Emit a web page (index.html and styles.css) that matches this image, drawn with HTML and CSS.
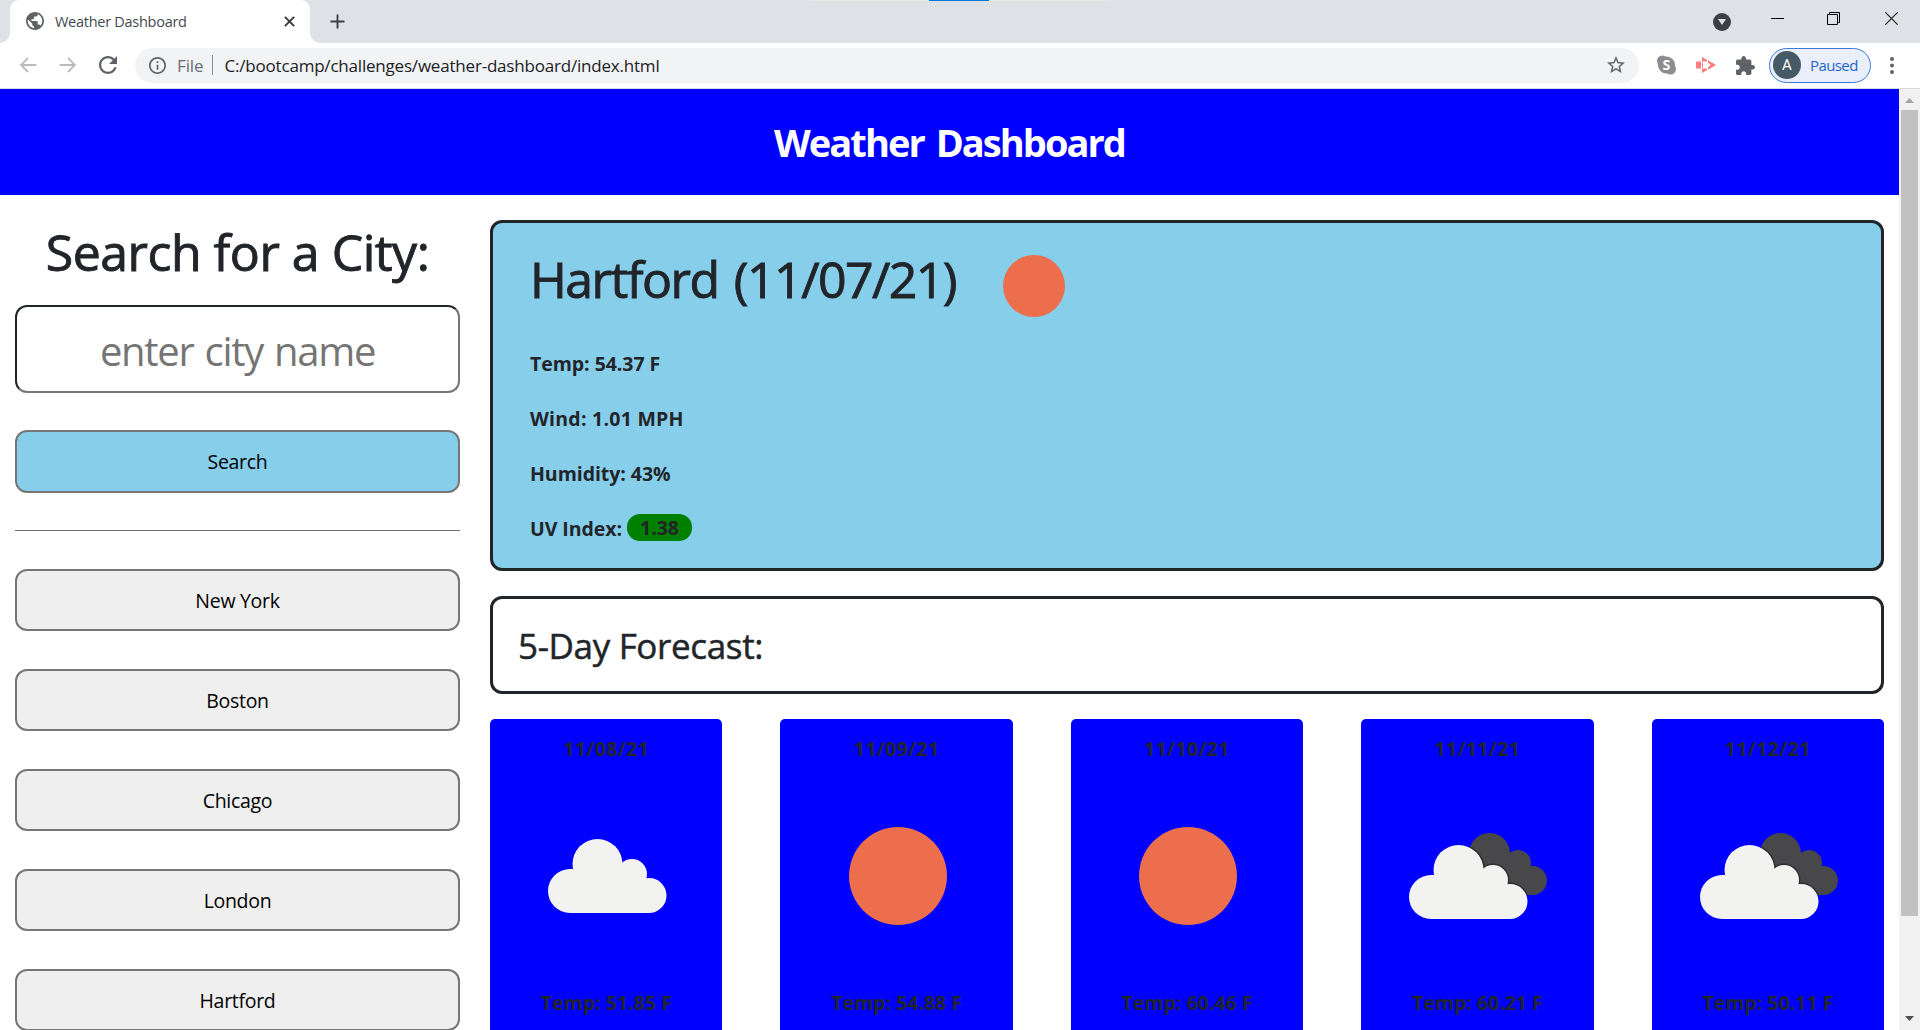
FILE: index.html
```html
<!DOCTYPE html>
<html lang="en">
<head>
<meta charset="utf-8">
<title>Weather Dashboard</title>
<link rel="stylesheet" href="styles.css">
</head>
<body>
<svg class="defs" width="0" height="0" aria-hidden="true">
  <symbol id="sun" viewBox="0 0 100 100"><circle cx="50" cy="50" r="50" fill="#ec6e4c"/></symbol>
  <symbol id="cloud" viewBox="0 0 119 74">
    <g fill="#f2f2f0"><circle cx="22" cy="52" r="22"/><circle cx="49.5" cy="25" r="25"/><circle cx="84" cy="35" r="15"/><circle cx="101" cy="56.5" r="17.5"/><path d="M22 30H84V42H101V74H22Z"/></g>
  </symbol>
  <clipPath id="back-cloud"><circle cx="80.5" cy="20.5" r="20.5"/><circle cx="109" cy="30" r="13"/><circle cx="123.5" cy="47.5" r="14.5"/><path d="M80 20H109L123 36V62H90Z"/></clipPath>
  <symbol id="clouds" viewBox="0 0 138 86">
    <g clip-path="url(#back-cloud)"><path d="M0 0H138V86H0Z" fill="#48484a"/><g fill="#303032"><circle cx="49.5" cy="37" r="26.500"/><circle cx="84" cy="47" r="16.500"/><circle cx="101" cy="68.500" r="19"/></g></g>
    <use href="#cloud" x="0" y="12" width="119" height="74"/>
  </symbol>
</svg>

<div class="tabstrip">
  <div class="tab">
    <svg class="globe" viewBox="2 2 20 20"><path fill="#5f6368" d="M12 2C6.480 2 2 6.480 2 12s4.480 10 10 10 10-4.480 10-10S17.520 2 12 2zm-1 17.930c-3.950-.49-7-3.850-7-7.930 0-.62.08-1.210.21-1.790L9 15v1c0 1.100.9 2 2 2v1.930zm6.900-2.540c-.26-.81-1-1.390-1.900-1.390h-1v-3c0-.55-.45-1-1-1H8v-2h2c.55 0 1-.45 1-1V7h2c1.100 0 2-.9 2-2v-.41c2.930 1.190 5 4.060 5 7.410 0 2.080-.8 3.970-2.100 5.390z"/></svg>
    <span class="tab-title">Weather Dashboard</span>
    <svg class="tab-close" viewBox="0 0 10 10"><path d="M.8.8l8.400 8.400M9.200.8L.8 9.200" stroke="#3c4043" stroke-width="1.900"/></svg>
  </div>
  <svg class="new-tab" viewBox="0 0 16 16"><path d="M8 .5v15M.5 8h15" stroke="#3c4043" stroke-width="2"/></svg>
  <div class="progress"></div>
  <div class="window-controls">
    <svg width="18" height="18" viewBox="0 0 18 18"><circle cx="9" cy="9" r="9" fill="#3c4043"/><path d="M5 6h8l-4 6z" fill="#dee1e6"/></svg>
    <svg class="minimise" width="13" height="13" viewBox="0 0 13 13"><path d="M0 6.500h13" stroke="#000"/></svg>
    <svg class="restore" width="13" height="13" viewBox="0 0 13 13"><path d="M.5 2.500h10v10H.5zM2.500 2.500v-2h10v10h-2" fill="none" stroke="#000"/></svg>
    <svg class="close" width="13" height="13" viewBox="0 0 13 13"><path d="M.3.3l12.400 12.400M12.700.3L.3 12.700" stroke="#222" stroke-width="1.200"/></svg>
  </div>
</div>

<div class="toolbar">
  <div class="nav">
    <svg width="18" height="16" viewBox="0 0 18 16"><path d="M17.500 8H2M9 1L2 8l7 7" fill="none" stroke="#babcbe" stroke-width="1.800"/></svg>
    <svg width="18" height="16" viewBox="0 0 18 16"><path d="M.5 8H16M9 1l7 7-7 7" fill="none" stroke="#babcbe" stroke-width="1.800"/></svg>
    <svg width="18" height="18" viewBox="4 4 16 16"><path fill="#5f6368" d="M17.650 6.350C16.200 4.900 14.210 4 12 4c-4.420 0-7.990 3.580-7.990 8s3.570 8 7.990 8c3.730 0 6.840-2.550 7.730-6h-2.080c-.82 2.330-3.040 4-5.650 4-3.310 0-6-2.690-6-6s2.690-6 6-6c1.660 0 3.140.69 4.220 1.780L13 11h7V4l-2.350 2.350z"/></svg>
  </div>
  <div class="omnibox">
    <svg width="17" height="17" viewBox="2 2 20 20"><path fill="#5f6368" d="M11 7h2v2h-2zm0 4h2v6h-2zm1-9C6.480 2 2 6.480 2 12s4.480 10 10 10 10-4.480 10-10S17.520 2 12 2zm0 18c-4.410 0-8-3.590-8-8s3.590-8 8-8 8 3.590 8 8-3.590 8-8 8z"/></svg>
    <span class="scheme">File</span>
    <span class="divider"></span>
    <span class="url">C:/bootcamp/challenges/weather-dashboard/index.html</span>
    <svg class="star" width="18" height="18" viewBox="2 2 20 20"><path fill="#5f6368" d="M22 9.240l-7.190-.62L12 2 9.190 8.630 2 9.240l5.460 4.730L5.820 21 12 17.270 18.180 21l-1.630-7.030L22 9.240zM12 15.400l-3.760 2.270 1-4.280-3.320-2.880 4.380-.38L12 6.100l1.710 4.040 4.380.38-3.320 2.880 1 4.280L12 15.400z"/></svg>
  </div>
  <div class="extensions">
    <svg width="19" height="20" viewBox="0 0 20 20"><g fill="#8d8d8d"><circle cx="10" cy="10" r="9"/><circle cx="5.700" cy="5.700" r="5.700"/><circle cx="14.300" cy="14.300" r="5.700"/></g><text x="10" y="15.500" text-anchor="middle" class="skype-letter">S</text></svg>
    <svg width="20" height="16" viewBox="0 0 20 16"><path fill="#ff7e7e" d="M0 4.500h5v7H0zM6 0l5 2.700v1.800H6zM6 16l5-2.700v-1.800H6zM12 3.300L20 8l-8 4.700v-2.200L14.500 8 12 5.500zM6 5.500h1v5H6z"/></svg>
    <svg width="19" height="19" viewBox="2 1 21 21"><path fill="#5f6368" d="M20.500 11H19V7c0-1.100-.9-2-2-2h-4V3.500C13 2.120 11.880 1 10.500 1S8 2.120 8 3.500V5H4c-1.100 0-1.990.9-1.990 2v3.800H3.500c1.490 0 2.700 1.210 2.700 2.700s-1.210 2.700-2.700 2.700H2V20c0 1.100.9 2 2 2h3.800v-1.500c0-1.490 1.210-2.700 2.700-2.700 1.490 0 2.700 1.210 2.700 2.700V22H17c1.100 0 2-.9 2-2v-4h1.500c1.380 0 2.500-1.120 2.500-2.500S21.880 11 20.500 11z"/></svg>
  </div>
  <div class="profile"><span class="avatar">A</span><span class="profile-state">Paused</span></div>
  <svg class="menu" width="4" height="17" viewBox="0 0 4 17"><g fill="#5f6368"><circle cx="2" cy="2" r="2"/><circle cx="2" cy="8.500" r="2"/><circle cx="2" cy="15" r="2"/></g></svg>
</div>

<div class="viewport">
  <div class="page">
    <header class="page-header"><h1>Weather Dashboard</h1></header>
    <div class="columns">
      <aside class="sidebar">
        <h2 class="search-title">Search for a City:</h2>
        <input class="city-input" type="text" placeholder="enter city name">
        <button class="btn btn-search">Search</button>
        <hr class="rule">
        <div class="history">
          <button class="btn">New York</button>
          <button class="btn">Boston</button>
          <button class="btn">Chicago</button>
          <button class="btn">London</button>
          <button class="btn">Hartford</button>
        </div>
      </aside>
      <main class="main">
        <section class="current">
          <div class="current-head">
            <h2 class="current-title">Hartford (11/07/21)</h2>
            <svg class="current-icon"><use href="#sun"/></svg>
          </div>
          <p class="stat">Temp: 54.37 F</p>
          <p class="stat stat-wind">Wind: 1.01 MPH</p>
          <p class="stat">Humidity: 43%</p>
          <p class="stat">UV Index: <span class="uv">1.38</span></p>
        </section>
        <section class="forecast-head"><h3>5-Day Forecast:</h3></section>
        <section class="days">
          <article class="day"><p class="date">11/08/21</p><div class="day-icon"><svg width="119" height="74"><use href="#cloud"/></svg></div><p>Temp: 51.85 F</p></article>
          <article class="day"><p class="date">11/09/21</p><div class="day-icon"><svg width="98" height="98"><use href="#sun"/></svg></div><p>Temp: 54.88 F</p></article>
          <article class="day"><p class="date">11/10/21</p><div class="day-icon"><svg width="98" height="98"><use href="#sun"/></svg></div><p>Temp: 60.46 F</p></article>
          <article class="day"><p class="date">11/11/21</p><div class="day-icon"><svg width="138" height="86"><use href="#clouds"/></svg></div><p>Temp: 60.21 F</p></article>
          <article class="day"><p class="date">11/12/21</p><div class="day-icon"><svg width="138" height="86"><use href="#clouds"/></svg></div><p>Temp: 50.11 F</p></article>
        </section>
      </main>
    </div>
  </div>
  <div class="scrollbar">
    <svg width="9" height="5" viewBox="0 0 9 5"><path d="M0 5l4.500-5L9 5z" fill="#a3a3a3"/></svg>
    <div class="thumb"></div>
    <svg width="9" height="5" viewBox="0 0 9 5"><path d="M0 0h9L4.500 5z" fill="#505050"/></svg>
  </div>
</div>
</body>
</html>
```
FILE: styles.css
```css
* { box-sizing: border-box; }
body {
  margin: 0; width: 1920px; height: 1030px; overflow: hidden;
  display: flex; flex-direction: column;
  font-family: "Open Sans", "Noto Sans", sans-serif; color: #212529; background: #fff;
}
h1, h2, h3, p { margin: 0; }
svg { display: block; flex: none; }
.defs { position: absolute; }

/* Browser tab strip */
.tabstrip { position: relative; flex: none; height: 43px; background: #dee1e6; display: flex; align-items: flex-start; }
.tab {
  position: relative; width: 300px; height: 43px; margin-left: 10px; padding: 0 15px 1px 16px;
  display: flex; align-items: center; background: #fff; border-radius: 9px 9px 0 0;
}
.tab::before, .tab::after { content: ""; position: absolute; bottom: 0; width: 10px; height: 10px; }
.tab::before { left: -10px; background: radial-gradient(circle at 0 0, transparent 9.5px, #fff 10px); }
.tab::after { right: -10px; background: radial-gradient(circle at 100% 0, transparent 9.5px, #fff 10px); }
.globe { width: 18px; height: 18px; }
.tab-title { margin-left: 11px; font-size: 14.500px; letter-spacing: -.27px; color: #45494d; white-space: nowrap; }
.tab-close { width: 11px; height: 11px; margin-left: auto; }
.new-tab { width: 15px; height: 15px; margin: 14px 0 0 20px; }
.progress {
  position: absolute; top: 0; left: 809px; width: 301px; height: 1px;
  background: linear-gradient(90deg, #e6e6e6 120px, #0078d7 120px, #0078d7 180px, #e6e6e6 180px);
}
.window-controls { margin-left: auto; display: flex; padding: 13px 22px 0 0; }
.minimise { margin: -1px 0 0 40px; }
.restore { margin: -1px 0 0 43px; }
.close { margin: -1px 0 0 45px; }

/* Browser toolbar */
.toolbar { flex: none; height: 46px; border-bottom: 1px solid #d8dadd; display: flex; align-items: center; padding: 0 26px 1px 19px; }
.nav { display: flex; align-items: center; gap: 22px; width: 116px; }
.omnibox {
  width: 1504px; height: 35px; padding: 0 14px; border-radius: 18px; background: #f1f3f4;
  display: flex; align-items: center; font-size: 17px; color: #202124;
}
.scheme { margin-left: 11px; color: #6b6f73; letter-spacing: -.1px; }
.divider { width: 1px; height: 20px; margin: 0 12px 0 8px; background: #8a9096; }
.url { letter-spacing: -.2px; }
.star { margin-left: auto; }
.extensions { display: flex; align-items: center; gap: 20px; margin-left: 18px; }
.skype-letter { font: 700 15px "Open Sans", sans-serif; fill: #fff; }
.profile {
  width: 102px; height: 35px; margin-left: 14px; padding-left: 3px; border: 1.500px solid #3c7ad6; border-radius: 18px;
  background: #e9f0fc; display: flex; align-items: center; color: #2465cc; font-size: 15px;
}
.avatar {
  width: 28px; height: 28px; border-radius: 50%; background: #455a64; color: #fff;
  font: 15px/28px Roboto, sans-serif; text-align: center;
}
.profile-state { margin-left: 9px; letter-spacing: -.6px; }
.menu { margin-left: auto; }

/* Page */
.viewport { flex: 1; min-height: 0; display: flex; }
.page { width: 1899px; overflow: hidden; }
.page-header { height: 106px; background: #00f; color: #fff; display: flex; align-items: center; justify-content: center; }
.page-header h1 { font-size: 38px; font-weight: 700; letter-spacing: -1.950px; word-spacing: 4px; }
.columns { display: flex; gap: 30px; padding: 25px 15px 0; }
.sidebar { width: 445px; flex: none; display: flex; flex-direction: column; }
.search-title, .current-title { font-size: 50px; font-weight: 500; -webkit-text-stroke: .9px #212529; white-space: nowrap; }
.search-title { line-height: 60px; padding-top: 2px; height: 60px; letter-spacing: -.5px; text-align: center; }
.city-input {
  width: 100%; height: 88px; margin: 25px 0 37px; padding: 2px 0 0; border: 2px solid;
  border-color: #212529 #767676 #767676 #212529; border-radius: 12px; background: #fff;
  font: 40px "Open Sans", sans-serif; letter-spacing: -1.300px; word-spacing: 2px; text-align: center;
}
.city-input::placeholder { color: #757575; opacity: 1; }
.btn {
  width: 100%; height: 62px; padding: 0; border: 2px solid #767676; border-radius: 12px; background: #efefef; color: #000;
  font: 19.500px "Open Sans", sans-serif; letter-spacing: -.3px;
}
.btn-search { height: 63px; background: skyblue; }
.rule { width: 100%; height: 1px; margin: 37px 0 38px; border: 0; background: #707274; }
.history { display: flex; flex-direction: column; gap: 38px; }

.main { flex: 1; display: flex; flex-direction: column; gap: 25px; }
.current { height: 351px; padding: 0 37px 12px; border: 3px solid #212529; border-radius: 12px; background: skyblue; }
.current-head { height: 113px; padding-bottom: 2px; display: flex; align-items: center; justify-content: flex-start; }
.current-title { width: 426px; line-height: 60px; letter-spacing: -1.550px; word-spacing: 4px; }
.current-icon { width: 62px; height: 62px; margin: 15px 0 0 47px; }
.stat { font-size: 19.500px; line-height: 55px; font-weight: 700; letter-spacing: -.05px; }
.stat-wind { letter-spacing: .25px; }
.uv { display: inline-block; position: relative; top: -1px; width: 65px; height: 27px; line-height: 28px; border-radius: 13px; background: green; text-align: center; }
.forecast-head { height: 98px; padding: 1px 0 0 25px; border: 3px solid #212529; border-radius: 12px; display: flex; align-items: center; }
.forecast-head h3 { font-size: 35px; font-weight: 500; letter-spacing: -.35px; -webkit-text-stroke: .5px #212529; }
.days { display: flex; justify-content: space-between; }
.day {
  width: 232.400px; height: 400px; padding-top: 16px; border-radius: 5px; background: #00f;
  text-align: center; font-size: 19.500px; line-height: 28px; font-weight: 700;
}
.date { letter-spacing: .35px; }
.day-icon { height: 226px; padding-left: 2px; display: flex; align-items: center; justify-content: center; }

.scrollbar { width: 21px; background: #f1f1f1; display: flex; flex-direction: column; align-items: center; padding: 9px 0; }
.thumb { width: 17px; height: 806px; margin: 7px 0 auto; background: #c1c1c1; }
```
